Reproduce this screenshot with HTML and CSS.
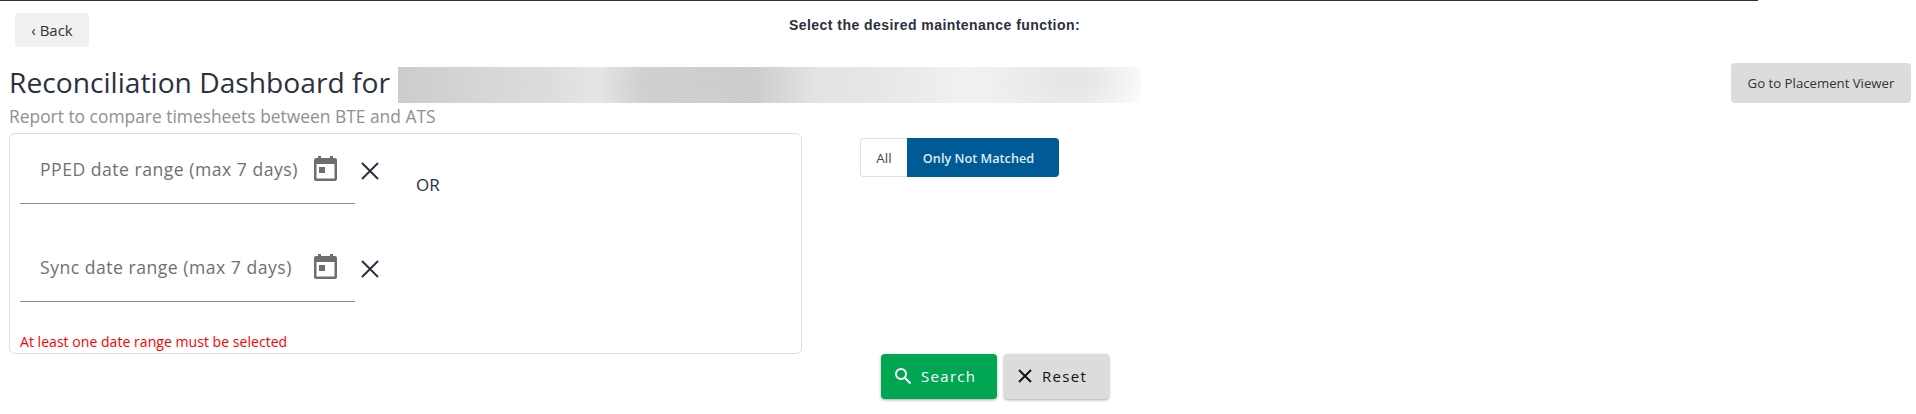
FILE: index.html
```html
<!DOCTYPE html>
<html lang="en">
<head>
    <meta charset="UTF-8">
    <meta name="viewport" content="width=device-width, initial-scale=1.0">
    <title>Reconciliation Dashboard</title>
    <link rel="stylesheet" href="styles.css">
</head>
<body>
    <div class="topLine"></div>
    <div class="topRow">
        <button class="backBtn">&lsaquo; Back</button>
        <h4 class="maintTitle">Select the desired maintenance function:</h4>
    </div>
    <div class="titleRow">
        <h1>Reconciliation Dashboard for</h1>
        <div class="hiddenName"></div>
        <button class="viewerBtn">Go to Placement Viewer</button>
    </div>
    <p class="subtitle">Report to compare timesheets between BTE and ATS</p>
    <div class="filterRow">
        <div class="datePanel">
            <div class="dateRows">
                <div class="dateRow">
                    <div class="dateField">
                        <span class="dateLabel">PPED date range (max 7 days)</span>
                        <svg class="calIcon" viewBox="0 0 23 25"><path fill-rule="evenodd" d="M4 0h3v2h9V0h3v2h2a2 2 0 0 1 2 2v19a2 2 0 0 1-2 2H2a2 2 0 0 1-2-2V4a2 2 0 0 1 2-2h2zM2.500 8v14.500h18V8zM5 11h6v6H5z"/></svg>
                    </div>
                    <svg class="clearIcon" viewBox="0 0 18 18"><path d="M1 1l16 16M17 1L1 17"/></svg>
                </div>
                <div class="dateRow">
                    <div class="dateField">
                        <span class="dateLabel">Sync date range (max 7 days)</span>
                        <svg class="calIcon" viewBox="0 0 23 25"><path fill-rule="evenodd" d="M4 0h3v2h9V0h3v2h2a2 2 0 0 1 2 2v19a2 2 0 0 1-2 2H2a2 2 0 0 1-2-2V4a2 2 0 0 1 2-2h2zM2.500 8v14.500h18V8zM5 11h6v6H5z"/></svg>
                    </div>
                    <svg class="clearIcon" viewBox="0 0 18 18"><path d="M1 1l16 16M17 1L1 17"/></svg>
                </div>
            </div>
            <span class="orText">OR</span>
            <div class="errorText">At least one date range must be selected</div>
        </div>
        <div class="toggleGroup">
            <button class="toggleBtn">All</button>
            <button class="toggleBtn active">Only Not Matched</button>
        </div>
    </div>
    <div class="actionRow">
        <button class="actionBtn searchBtn">
            <svg viewBox="0 0 18 18"><circle cx="7" cy="7" r="5"/><path d="M11 11l5.500 5.500"/></svg>
            Search
        </button>
        <button class="actionBtn resetBtn">
            <svg viewBox="0 0 18 18"><path d="M3 3l12 12M15 3L3 15"/></svg>
            Reset
        </button>
    </div>
</body>
</html>
```

FILE: styles.css
```css
body {
    font-family: 'Open Sans', sans-serif;
    background-color: white;
    color: #2b3040;
    margin: 0;
    padding: 0;
    height: 414px;
    overflow: hidden;
}
button {
    font-family: 'Open Sans', sans-serif;
    border: none;
    cursor: pointer;
}
.topLine {
    width: 1758px;
    height: 1px;
    background-color: #2b2f42;
}
.topRow {
    display: flex;
    height: 62px;
    padding-top: 12px;
    box-sizing: border-box;
}
.backBtn {
    width: 74px;
    height: 34px;
    margin-left: 15px;
    background-color: #f0f0f0;
    color: #333;
    font-size: 15px;
    border-radius: 3px;
}
.maintTitle {
    margin: 4px 0 0 700px;
    font-family: 'Liberation Sans', sans-serif;
    font-size: 14px;
    font-weight: bold;
    letter-spacing: 0.45px;
}
.titleRow {
    display: flex;
    align-items: flex-start;
    padding: 4px 5px 0 9px;
    height: 38px;
}
h1 {
    margin: 0;
    font-size: 28.2px;
    font-weight: normal;
    line-height: 30px;
    white-space: nowrap;
}
.hiddenName {
    width: 743px;
    height: 36px;
    margin-left: 8px;
    background:
        radial-gradient(ellipse 150px 40px at 36% 50%, rgba(195, 196, 198, 0.3), transparent),
        radial-gradient(ellipse 90px 34px at 91% 40%, rgba(220, 220, 220, 0.45), transparent),
        linear-gradient(90deg, #cbcccd 0%, #d4d5d6 10%, #dcdddd 20%, #ebebeb 27%, #d2d3d4 33%, #cdcecf 48%, #e3e3e3 56%, #e7e7e7 65%, #f1f1f1 76%, #ececec 92%, #fdfdfd 100%);
}
.viewerBtn {
    width: 180px;
    height: 40px;
    margin: -4px 0 0 auto;
    background-color: #dcdcdc;
    color: #333;
    font-size: 13.2px;
    border-radius: 4px;
}
.subtitle {
    margin: 0;
    padding-left: 9px;
    font-size: 17.4px;
    line-height: 22px;
    color: #918f8f;
}
.filterRow {
    display: flex;
    align-items: flex-start;
    margin: 6px 0 0 9px;
}
.datePanel {
    position: relative;
    width: 793px;
    height: 221px;
    box-sizing: border-box;
    border: 1px solid #dddddd;
    border-radius: 6px;
}
.dateRows {
    display: flex;
    flex-direction: column;
    gap: 33px;
    padding: 5px 0 0 10px;
}
.dateRow {
    display: flex;
    align-items: flex-start;
}
.dateField {
    display: flex;
    align-items: center;
    justify-content: space-between;
    width: 335px;
    height: 65px;
    box-sizing: border-box;
    padding: 0 18px 4px 20px;
    border-bottom: 1px solid #8c8c8c;
}
.dateLabel {
    font-size: 17.6px;
    letter-spacing: 0.5px;
    color: #707070;
}
.calIcon {
    width: 23px;
    height: 25px;
    margin-bottom: 2px;
    fill: #6e6e6e;
}
.clearIcon {
    width: 18px;
    height: 18px;
    margin: 23px 0 0 6px;
    fill: none;
    stroke: #2b3040;
    stroke-width: 2;
}
.orText {
    position: absolute;
    left: 406px;
    top: 39px;
    font-size: 17px;
}
.errorText {
    margin: 30px 0 0 10px;
    font-size: 14.1px;
    color: #ff0000;
}
.toggleGroup {
    display: flex;
    margin: 5px 0 0 58px;
}
.toggleBtn {
    height: 39px;
    padding: 0;
    width: 47px;
    background-color: white;
    color: #444;
    font-size: 13.5px;
    border: 1px solid #e0e0e0;
    border-right: none;
    border-radius: 4px 0 0 4px;
}
.toggleBtn.active {
    width: 152px;
    padding: 0 9px 0 0;
    background-color: #005a96;
    color: #dfeaf2;
    font-size: 12.7px;
    font-weight: 600;
    border: none;
    border-radius: 0 4px 4px 0;
}
.actionRow {
    display: flex;
    gap: 7px;
    margin: 0 0 0 881px;
}
.actionBtn {
    display: flex;
    align-items: center;
    gap: 7px;
    height: 45px;
    padding-bottom: 2px;
    font-size: 15px;
    letter-spacing: 1.3px;
    border-radius: 4px;
    box-shadow: 0 1px 3px rgba(0, 0, 0, 0.35);
}
.actionBtn svg {
    width: 18px;
    height: 18px;
    fill: none;
    stroke: currentColor;
    stroke-width: 2;
}
.searchBtn {
    width: 116px;
    padding-left: 13px;
    gap: 9px;
    background-color: #00a651;
    color: white;
}
.resetBtn {
    width: 105px;
    padding-left: 12px;
    gap: 8px;
    background-color: #dcdcdc;
    color: #111;
}
```
